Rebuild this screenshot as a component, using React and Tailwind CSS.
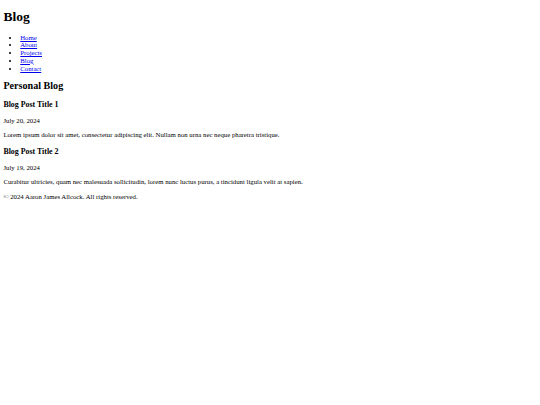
export default function App() {
  const links = ["Home", "About", "Projects", "Blog", "Contact"];
  const posts = [
    {
      title: "Blog Post Title 1",
      date: "July 20, 2024",
      text: "Lorem ipsum dolor sit amet, consectetur adipiscing elit. Nullam non urna nec neque pharetra tristique.",
    },
    {
      title: "Blog Post Title 2",
      date: "July 19, 2024",
      text: "Curabitur ultricies, quam nec malesuada sollicitudin, lorem nunc luctus purus, a tincidunt ligula velit at sapien.",
    },
  ];
  return (
    <div className="min-h-[405px] bg-white text-black font-['Liberation_Serif','Times_New_Roman',serif] text-[6.75px] leading-[1.15] px-[3.375px] py-[9.05px]">
      <header>
        <h1 className="text-[13.5px] font-bold leading-[1.15] mb-[9.05px]">Blog</h1>
        <nav>
          <ul className="list-disc pl-[16.875px] my-[6.75px]">
            {links.map((l) => (
              <li key={l}>
                <a href="#" className="text-[#0000ee] underline decoration-[0.45px] underline-offset-[0.8px]">
                  {l}
                </a>
              </li>
            ))}
          </ul>
        </nav>
      </header>
      <main>
        <h2 className="text-[10.125px] font-bold leading-[1.15] mt-[7.4px] mb-[8.4px]">Personal Blog</h2>
        {posts.map((p) => (
          <article key={p.title}>
            <h3 className="text-[7.9px] font-bold leading-[1.15] my-[7.9px]">{p.title}</h3>
            <p className="my-[6.75px]">{p.date}</p>
            <p className="my-[6.75px]">{p.text}</p>
          </article>
        ))}
      </main>
      <footer>
        <p className="my-[6.75px]">© 2024 Aaron James Allcock. All rights reserved.</p>
      </footer>
    </div>
  );
}
